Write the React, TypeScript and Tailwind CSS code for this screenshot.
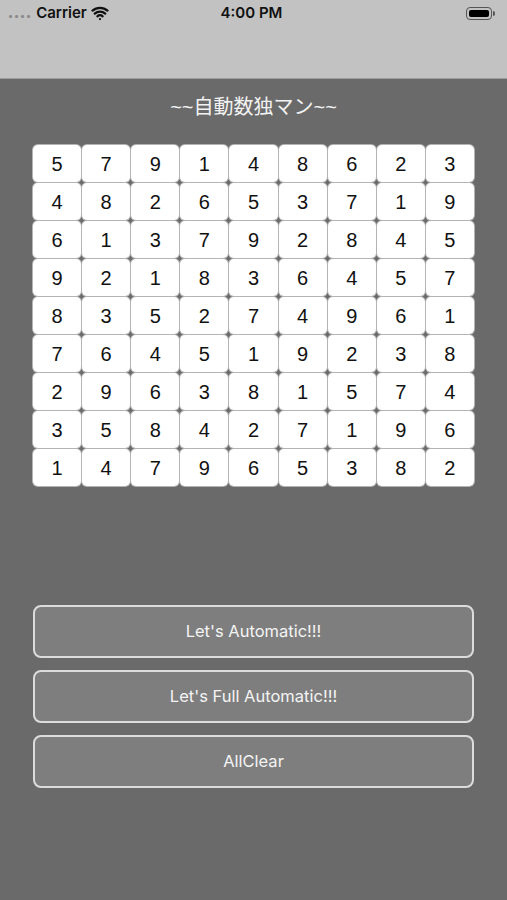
import { Wifi } from 'lucide-react';

const board = [
  [5, 7, 9, 1, 4, 8, 6, 2, 3],
  [4, 8, 2, 6, 5, 3, 7, 1, 9],
  [6, 1, 3, 7, 9, 2, 8, 4, 5],
  [9, 2, 1, 8, 3, 6, 4, 5, 7],
  [8, 3, 5, 2, 7, 4, 9, 6, 1],
  [7, 6, 4, 5, 1, 9, 2, 3, 8],
  [2, 9, 6, 3, 8, 1, 5, 7, 4],
  [3, 5, 8, 4, 2, 7, 1, 9, 6],
  [1, 4, 7, 9, 6, 5, 3, 8, 2],
];

const buttons = ["Let's Automatic!!!", "Let's Full Automatic!!!", 'AllClear'];

function StatusBar() {
  return (
    <div className="h-[79px] bg-[#c2c2c2] border-b border-[#9a9a9a]">
      <div className="h-[26px] flex items-center px-2 text-[15px] font-semibold text-[#111] font-['Inter',sans-serif]">
        <div className="flex-1 flex items-center gap-1">
          <span className="text-[#8a8a8a] text-[10px] tracking-[1px] leading-none pt-1">••••</span>
          <span>Carrier</span>
          <Wifi className="w-[18px] h-[18px]" strokeWidth={3} />
        </div>
        <span>4:00 PM</span>
        <div className="flex-1 flex justify-end items-center pr-[4px]">
          <div className="w-[26px] h-[13px] rounded-[4px] border border-[#555] p-[2px]">
            <div className="w-full h-full rounded-[2px] bg-black" />
          </div>
          <div className="w-[2px] h-[5px] bg-[#555] rounded-r-sm ml-px" />
        </div>
      </div>
    </div>
  );
}

export default function App() {
  return (
    <div
      className="w-[507px] h-[900px] bg-[#6a6a6a] flex flex-col"
      style={{ fontFamily: '"Liberation Sans", "Noto Sans CJK JP", sans-serif' }}
    >
      <StatusBar />

      <h1 className="mt-[16px] text-center text-[20px] leading-[24px] text-[#f2f2f2]">~~自動数独マン~~</h1>

      {/* Board */}
      <div className="mt-[26px] mx-[33px] grid grid-cols-9 gap-px">
        {board.flat().map((n, i) => (
          <div
            key={i}
            className="h-[37px] bg-white rounded-[5px] ring-1 ring-[#b4b4b4] flex items-center justify-center text-[20px] text-[#111]"
          >
            {n}
          </div>
        ))}
      </div>

      {/* Actions */}
      <div className="mt-[119px] mx-[33px] flex flex-col gap-[12px] font-['Inter',sans-serif]">
        {buttons.map((label) => (
          <button
            key={label}
            className="h-[53px] rounded-[8px] bg-[#7e7e7e] border-2 border-[#dcdcdc] text-[16.5px] text-[#f4f4f4]"
          >
            {label}
          </button>
        ))}
      </div>
    </div>
  );
}
